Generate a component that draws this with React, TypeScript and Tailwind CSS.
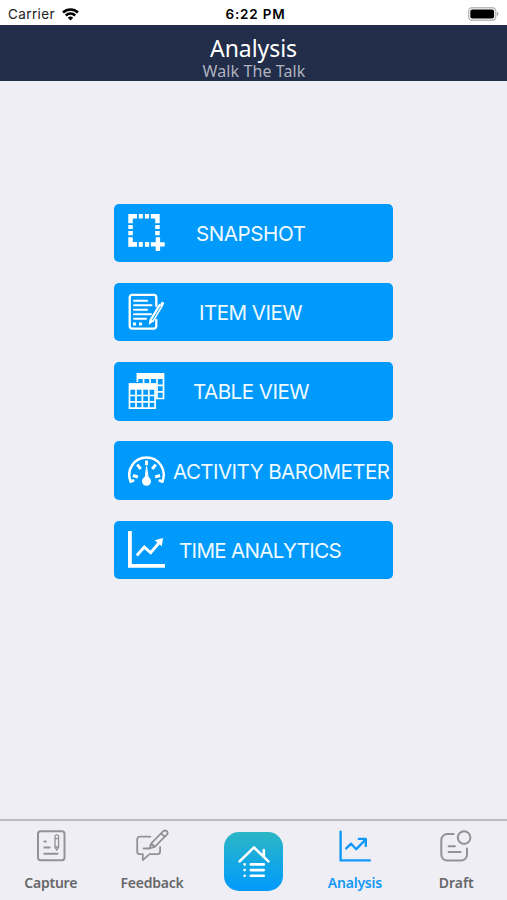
import React from "react";

const SnapshotIcon = () => (
  <svg width="38" height="38" viewBox="0 0 38 38" fill="#fff">
    <path d="M.3 0H9v4.6H4.8V9.2H.3zM22.8 0h8.9v9.2h-4.5V4.6h-4.4zM.3 23.2h4.5v4.9H9v4.6H.3z" />
    <path d="M10.8 0h4v4.6h-4zM16.9 0h4.2v4.6h-4.2zM10.8 28.1h4v4.6h-4zM16.9 28.1h4.2v4.6h-4.2z" />
    <path d="M.3 11h4.5v4.1H.3zM.3 17.1h4.5v4.2H.3zM27.2 11h4.5v4.1h-4.5zM27.2 17.1h4.5v4.2h-4.5z" />
    <path d="M27.7 23.3h4.4v4.9h4.6v4.3h-4.6V37h-4.4v-4.5h-4.9v-4.3h4.9z" />
  </svg>
);

const ItemIcon = () => (
  <svg width="38" height="38" viewBox="0 0 38 38" fill="none" stroke="#fff" strokeLinecap="round" strokeLinejoin="round">
    <path d="M28.3 13V4.2a2.4 2.4 0 0 0-2.4-2.4H4.1a2.4 2.4 0 0 0-2.4 2.4v29a2.4 2.4 0 0 0 2.4 2.4h21.8a2.4 2.4 0 0 0 2.4-2.4v-6.4" strokeWidth="2.3" />
    <path d="M6 7.7h13M6 12.2h17.5M6 16.8h13M6 21.3h17M6 25.8h12" strokeWidth="2" />
    <path d="m23.4 28 9.6-16" strokeWidth="4.4" strokeLinecap="butt" />
    <path d="m24.3 27.2 8.2-13.6" stroke="#0099fc" strokeWidth=".9" />
    <path d="m21.9 26.8-.7 4.4 3.6-2.7z" fill="#fff" strokeWidth=".8" />
    <path d="m33.8 11.6.8-1.3" strokeWidth="3" />
    <path d="M5 31h3M11 31h3" strokeWidth="3" strokeLinecap="butt" />
  </svg>
);

const TableIcon = () => (
  <svg width="38" height="38" viewBox="0 0 38 38" fill="none" stroke="#fff" strokeWidth="1.7">
    <path d="M9.4 10V1.8h26.1v24.7h-7.8" />
    <path d="M9 1h27v6H9z" fill="#fff" stroke="none" />
    <path d="M28 13.3h7.5M28 19.8h7.5M29 6v20.5M22 7v5M15.6 7v5" />
    <path d="M.7 11.4h27.2v25.7H.7z" fill="#0099fc" stroke="none" />
    <path d="M1.5 12.2h25.6v24H1.5zM1.5 23.5h25.6M1.5 29.9h25.6M8 17v19.2M14.4 17v19.2M20.8 17v19.2" />
    <path d="M1 11.5h26.8v6.2H1z" fill="#fff" stroke="none" />
  </svg>
);

const BarometerIcon = () => (
  <svg width="38" height="38" viewBox="0 0 38 38" fill="none" stroke="#fff" strokeLinecap="round">
    <path d="M2.6 29.3A17.2 17.2 0 1 1 34.4 29.3" strokeWidth="2.5" />
    <path d="m2.6 29.5 2.6-.9M34.4 29.5l-2.6-.9" strokeWidth="2.7" />
    <path d="m4.9 23.5 5 1.5M9.2 12.6l3.6 4.4M18.5 8.4v4.8M27.8 12.6 24.2 17M32.1 23.5l-5 1.5" strokeWidth="2.9" strokeLinecap="butt" />
    <path d="m18.5 15-1.4 11h2.8z" fill="#fff" strokeWidth="1" />
    <circle cx="18.5" cy="29.3" r="4.5" fill="#fff" stroke="none" />
  </svg>
);

const TimeIcon = () => (
  <svg width="38" height="38" viewBox="0 0 38 38" fill="none" stroke="#fff">
    <path d="M1.9 0v34.8H37" strokeWidth="3.8" />
    <path d="m8.8 24.5 7.5-8.4 6.4 5.7L31.8 11" strokeWidth="2.9" />
    <path d="m26.6 9.3 8.4-2.4-1.1 8.4z" fill="#fff" stroke="none" />
  </svg>
);

const buttons = [
  { label: "SNAPSHOT", icon: <SnapshotIcon />, margin: "ml-[30.5px]", width: 109.5 },
  { label: "ITEM VIEW", icon: <ItemIcon />, margin: "ml-[33.5px]", width: 103 },
  { label: "TABLE VIEW", icon: <TableIcon />, margin: "ml-[27.5px]", width: 116 },
  { label: "ACTIVITY BAROMETER", icon: <BarometerIcon />, margin: "ml-[7.5px]", width: 216.5 },
  { label: "TIME ANALYTICS", icon: <TimeIcon />, margin: "ml-[13.5px]", width: 162 },
];

const CaptureIcon = () => (
  <svg width="32" height="34" viewBox="0 0 32 34" fill="none" stroke="#929295" strokeWidth="2" strokeLinecap="round" strokeLinejoin="round">
    <rect x="3" y="2.2" width="26.5" height="29" rx="2.6" />
    <path d="M9.4 12.5h1.4M9.4 18.6h5.2M9.4 24.8h13.2" />
    <path d="M20 7.6a1.8 1.8 0 0 1 3.6 0v10.5l-1.8 3.1-1.8-3.1zM20 9.6h3.6M20 18h3.6" strokeWidth="1.3" />
  </svg>
);

const FeedbackIcon = () => (
  <svg width="34" height="34" viewBox="0 0 34 34" fill="none" stroke="#929295" strokeWidth="1.8" strokeLinecap="round" strokeLinejoin="round">
    <path d="M15.3 7.7H4.8a2.6 2.6 0 0 0-2.6 2.6v12.3a2.6 2.6 0 0 0 2.6 2.6h3v6l6.7-6h8a2.6 2.6 0 0 0 2.6-2.6v-4.7" />
    <path d="m14.5 19.5 1.7-5.2L28.3 2.2a2.4 2.4 0 0 1 3.5 3.5L19.7 17.8zM16.2 14.3l3.5 3.5M26.2 4.3l3.5 3.5M8.6 19.5h6" />
  </svg>
);

const AnalysisIcon = () => (
  <svg width="34" height="34" viewBox="0 0 34 34" fill="none" stroke="#1498f8" strokeWidth="2.4" strokeLinecap="round" strokeLinejoin="round">
    <path d="M2.6 2.6v28.8h29.2" />
    <path d="m8.2 19.4 4.9-4.7 5.2 5.5L27.6 10.5M20.8 9.9h7v7" />
  </svg>
);

const DraftIcon = () => (
  <svg width="34" height="34" viewBox="0 0 34 34" fill="none" stroke="#929295" strokeWidth="2" strokeLinecap="round" strokeLinejoin="round">
    <path d="M14.6 5.1H8.3a6 6 0 0 0-6 6v14.5a6 6 0 0 0 6 6H22a6 6 0 0 0 6-6v-6" />
    <circle cx="25.1" cy="8.6" r="6.3" />
    <path d="M9.6 17.2h6.3M9.6 23h12" />
  </svg>
);

const HomeIcon = () => (
  <svg width="32" height="34" viewBox="0 0 32 34" fill="none" stroke="#fff" strokeWidth="2.6" strokeLinecap="round" strokeLinejoin="round">
    <path d="M1.6 16.4 16 2.4l14.4 14M25.8 11V5" />
    <path d="M12.8 19.4h13M12.8 25.1h13M12.8 30.8h13" />
    <path d="M6.6 19.4h.1M6.6 25.1h.1M6.6 30.8h.1" />
  </svg>
);

// keeps a label at its given width by spreading its letters
const FitText = ({ text, width }: { text: string; width: number }) => {
  const ref = React.useRef<HTMLSpanElement>(null);
  const [spacing, setSpacing] = React.useState(0);

  React.useLayoutEffect(() => {
    if (ref.current) {
      const natural = ref.current.getBoundingClientRect().width;
      setSpacing((width - natural) / text.length);
    }
  }, []);

  return (
    <span ref={ref} className="inline-block whitespace-nowrap" style={{ letterSpacing: spacing }}>
      {text}
    </span>
  );
};

const Tab = ({ label, width, icon, active }: { label: string; width: number; icon: React.ReactNode; active?: boolean }) => (
  <button className="flex w-[101.4px] flex-col items-center pt-[8px]">
    <span className="flex h-[34px] items-center">{icon}</span>
    <span className={`mt-[10px] font-['Noto_Sans','Open_Sans',sans-serif] text-[14px] leading-[20px] font-semibold ${active ? "text-[#1498f8]" : "text-[#66676b]"}`}>
      <FitText text={label} width={width} />
    </span>
  </button>
);

export default function App() {
  return (
    <div className="flex h-[900px] w-[507px] flex-col overflow-hidden bg-[#efeef4]">
      <div className="grid h-[25px] shrink-0 grid-cols-3 items-center bg-white px-2 font-['Inter','Liberation_Sans',sans-serif] text-[13.5px] text-[#222]">
        <div className="flex items-center gap-[7px] pt-[3px]">
          <FitText text="Carrier" width={47} />
          <svg width="17" height="13" viewBox="0 0 17 13" fill="none" stroke="#000" strokeWidth="2.5">
            <path d="M1 4.5a10.7 10.7 0 0 1 15 0M3.8 7.5a6.7 6.7 0 0 1 9.4 0" />
            <path d="M5.8 9.7a3.9 3.9 0 0 1 5.4 0L8.5 12.4z" fill="#000" stroke="none" />
          </svg>
        </div>
        <div className="flex justify-center pt-[3px] pl-1 font-semibold text-black">
          <FitText text="6:22 PM" width={60} />
        </div>
        <div className="flex justify-end pt-[2px]">
          <svg width="33" height="16" viewBox="0 0 33 16">
            <rect x="2.6" y="1.7" width="27.2" height="12.6" rx="3.7" fill="none" stroke="#b9b9b9" strokeWidth="1.4" />
            <rect x="4.3" y="3.4" width="23.8" height="9.2" rx="2" />
            <path d="M31 6.1c2 .6 2 3.2 0 3.8z" fill="#aaa" />
          </svg>
        </div>
      </div>

      <div className="flex h-[55.5px] shrink-0 flex-col items-center bg-[#212d49] font-['Noto_Sans','Open_Sans',sans-serif]">
        <h1 className="mt-[8px] text-[23px] leading-[30px] text-white">
          <FitText text="Analysis" width={87} />
        </h1>
        <p className="pl-px text-[16px] leading-[17px] text-[#afb3bf]">
          <FitText text="Walk The Talk" width={103} />
        </p>
      </div>

      <div className="flex flex-1 flex-col items-center gap-[20.6px] pt-[123px]">
        {buttons.map((b) => (
          <button
            key={b.label}
            className="flex h-[58.7px] w-[279px] shrink-0 items-center rounded-[5px] bg-[#0099fc] pl-[13.5px] font-['Inter','Liberation_Sans',sans-serif] text-[20.6px] leading-7 text-[#effaff]"
          >
            <span className="w-[38px] shrink-0">{b.icon}</span>
            <span className={`${b.margin} shrink-0 pt-[2px] text-left`}>
              <FitText text={b.label} width={b.width} />
            </span>
          </button>
        ))}
      </div>

      <div className="flex h-[81px] shrink-0 border-t-2 border-[#bcbcc0]">
        <Tab label="Capture" width={53} icon={<CaptureIcon />} />
        <Tab label="Feedback" width={63} icon={<FeedbackIcon />} />
        <button className="flex w-[101.4px] justify-center pt-[11px]">
          <span className="flex h-[59px] w-[59px] items-center justify-center rounded-[15px] bg-linear-to-b from-[#2bb6c4] to-[#0499fd] pt-px pl-px">
            <HomeIcon />
          </span>
        </button>
        <Tab label="Analysis" width={54} icon={<AnalysisIcon />} active />
        <Tab label="Draft" width={35} icon={<DraftIcon />} />
      </div>
    </div>
  );
}
